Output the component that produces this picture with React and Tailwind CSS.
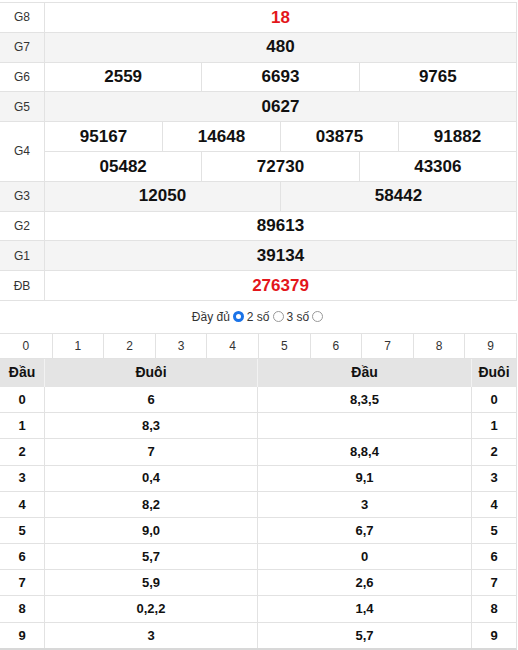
import React from "react";

const RED = "text-[#e3161b]";

function Row({ label, bg, lines, red }) {
  return (
    <div className={`flex border-b border-[#e2e2e2] ${bg ? "bg-[#f4f4f4]" : "bg-white"}`}>
      <div className="w-[45px] shrink-0 border-r border-[#e2e2e2] flex items-center justify-center text-[12px] text-[#333]">
        {label}
      </div>
      <div className="flex-1 flex flex-col">
        {lines.map((line, i) => (
          <div
            key={i}
            className={`flex ${i > 0 ? "border-t border-[#e2e2e2] h-[29.8px]" : "h-[28.8px]"}`}
          >
            {line.map((n, j) => (
              <div
                key={j}
                className={`flex-1 basis-0 flex items-center justify-center text-[17px] font-bold ${
                  red ? RED : "text-[#111]"
                } ${j > 0 ? "border-l border-[#e2e2e2]" : ""}`}
              >
                {n}
              </div>
            ))}
          </div>
        ))}
      </div>
    </div>
  );
}

const loto = [
  ["0", "6", "8,3,5", "0"],
  ["1", "8,3", "", "1"],
  ["2", "7", "8,8,4", "2"],
  ["3", "0,4", "9,1", "3"],
  ["4", "8,2", "3", "4"],
  ["5", "9,0", "6,7", "5"],
  ["6", "5,7", "0", "6"],
  ["7", "5,9", "2,6", "7"],
  ["8", "0,2,2", "1,4", "8"],
  ["9", "3", "5,7", "9"],
];

function Radio({ checked }) {
  return (
    <span
      className={`inline-block w-[11px] h-[11px] rounded-full mx-[3px] ${
        checked ? "border-[3px] border-[#1a73e8] bg-white" : "border border-[#999] bg-white"
      }`}
    />
  );
}

export default function App() {
  return (
    <div
      className="w-[518px] bg-white pt-[2px] text-[#333]"
      style={{ fontFamily: '"Liberation Sans", Arial, sans-serif' }}
    >
      <div className="w-[517px] border-t border-r border-[#e2e2e2]">
        <Row label="G8" lines={[["18"]]} red />
        <Row label="G7" bg lines={[["480"]]} />
        <Row label="G6" lines={[["2559", "6693", "9765"]]} />
        <Row label="G5" bg lines={[["0627"]]} />
        <Row
          label="G4"
          lines={[
            ["95167", "14648", "03875", "91882"],
            ["05482", "72730", "43306"],
          ]}
        />
        <Row label="G3" bg lines={[["12050", "58442"]]} />
        <Row label="G2" lines={[["89613"]]} />
        <Row label="G1" bg lines={[["39134"]]} />
        <Row label="ĐB" lines={[["276379"]]} red />
      </div>

      <div className="h-[32px] flex items-center justify-center text-[12px] text-[#333]">
        <span>Đầy đủ</span>
        <Radio checked />
        <span>2 số</span>
        <Radio />
        <span>3 số</span>
        <Radio />
      </div>

      <div className="w-[517px] border-t border-r border-[#e2e2e2] border-b-2 border-b-[#d8d8d8]">
        <div className="grid grid-cols-10 h-[25px] border-b border-[#e2e2e2]">
          {Array.from({ length: 10 }, (_, i) => (
            <div
              key={i}
              className={`flex items-center justify-center text-[12px] text-[#333] ${
                i > 0 ? "border-l border-[#e2e2e2]" : ""
              }`}
            >
              {i}
            </div>
          ))}
        </div>
        <div className="flex h-[28px] bg-[#e4e4e4] text-[14px] font-bold text-[#111]">
          <div className="w-[45px] flex items-center justify-center border-r border-[#f2f2f2]">Đầu</div>
          <div className="w-[213px] flex items-center justify-center border-r border-[#f2f2f2]">Đuôi</div>
          <div className="w-[214px] flex items-center justify-center border-r border-[#f2f2f2]">Đầu</div>
          <div className="flex-1 flex items-center justify-center">Đuôi</div>
        </div>
        {loto.map((r, i) => (
          <div
            key={i}
            className={`flex text-[13px] font-bold text-[#111] ${
              i > 0 ? "border-t border-[#e2e2e2] h-[26.2px]" : "h-[25.2px]"
            }`}
          >
            <div className="w-[45px] flex items-center justify-center border-r border-[#e2e2e2]">{r[0]}</div>
            <div className="w-[213px] flex items-center justify-center border-r border-[#e2e2e2]">{r[1]}</div>
            <div className="w-[214px] flex items-center justify-center border-r border-[#e2e2e2]">{r[2]}</div>
            <div className="flex-1 flex items-center justify-center">{r[3]}</div>
          </div>
        ))}
      </div>
    </div>
  );
}
